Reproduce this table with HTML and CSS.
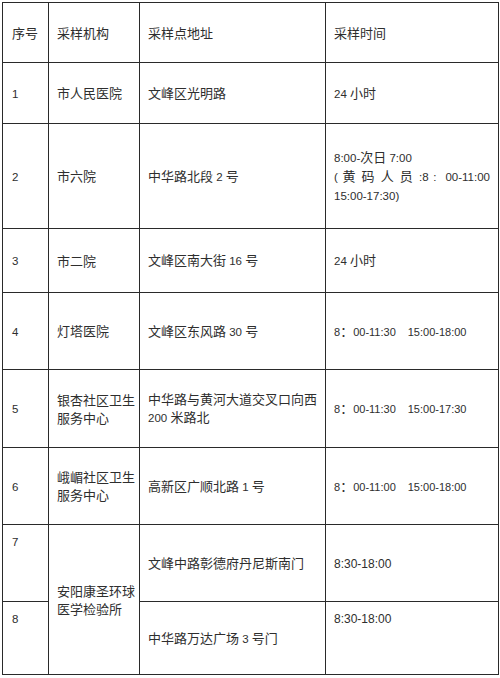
FILE: index.html
```html
<!DOCTYPE html>
<html lang="zh">
<head>
<meta charset="utf-8">
<link rel="stylesheet" href="styles.css">
</head>
<body>
<table class="sheet">
  <colgroup>
    <col class="c-no">
    <col class="c-org">
    <col class="c-addr">
    <col class="c-time">
  </colgroup>
  <tr class="r-head">
    <td>序号</td><td>采样机构</td><td>采样点地址</td><td>采样时间</td>
  </tr>
  <tr class="r1">
    <td><span class="n">1</span></td><td>市人民医院</td><td>文峰区光明路</td><td><span class="n">24 </span>小时</td>
  </tr>
  <tr class="r2">
    <td><span class="n">2</span></td><td>市六院</td><td>中华路北段<span class="n"> 2 </span>号</td>
    <td>
      <div><span class="n">8:00-</span>次日<span class="n"> 7:00</span></div>
      <div class="just"><span class="n">(</span> 黄 码 人 员 <span class="n">:8</span> <span class="n">:</span> &nbsp;<span class="n">00-11:00</span></div>
      <div><span class="n">15:00-17:30)</span></div>
    </td>
  </tr>
  <tr class="r3">
    <td><span class="n">3</span></td><td>市二院</td><td>文峰区南大街<span class="n"> 16 </span>号</td><td><span class="n">24 </span>小时</td>
  </tr>
  <tr class="r4">
    <td><span class="n">4</span></td><td>灯塔医院</td><td>文峰区东风路<span class="n"> 30 </span>号</td><td><span class="n s">8</span>：<span class="n s">00-11:30</span><span class="gap"></span><span class="n s">15:00-18:00</span></td>
  </tr>
  <tr class="r5">
    <td><span class="n">5</span></td><td>银杏社区卫生<br>服务中心</td><td>中华路与黄河大道交叉口向西<br><span class="n">200 </span>米路北</td><td><span class="n s">8</span>：<span class="n s">00-11:30</span><span class="gap"></span><span class="n s">15:00-17:30</span></td>
  </tr>
  <tr class="r6">
    <td><span class="n">6</span></td><td>峨嵋社区卫生<br>服务中心</td><td>高新区广顺北路<span class="n"> 1 </span>号</td><td><span class="n s">8</span>：<span class="n s">00-11:00</span><span class="gap"></span><span class="n s">15:00-18:00</span></td>
  </tr>
  <tr class="r7">
    <td class="top"><span class="n">7</span></td><td rowspan="2">安阳康圣环球<br>医学检验所</td><td>文峰中路彰德府丹尼斯南门</td><td><span class="n m">8:30-18:00</span></td>
  </tr>
  <tr class="r8">
    <td class="top"><span class="n">8</span></td><td>中华路万达广场<span class="n"> 3 </span>号门</td><td class="top"><span class="n m">8:30-18:00</span></td>
  </tr>
</table>
</body>
</html>
```

FILE: styles.css
```css
html, body {
  margin: 0;
  padding: 0;
  background: #fff;
}

body {
  font-family: "Noto Sans CJK SC", "Liberation Sans", sans-serif;
  font-size: 13px;
  color: #2e2e2e;
}

.sheet {
  margin: 2px 0 0 2px;
  width: 496px;
  border-collapse: collapse;
  table-layout: fixed;
}

.c-no { width: 46px; }
.c-org { width: 91px; }
.c-addr { width: 186px; }
.c-time { width: 173px; }

.sheet td {
  border: 1px solid #2a2a2a;
  padding: 0 2px 0 8px;
  line-height: 18px;
  vertical-align: middle;
  text-align: left;
  white-space: nowrap;
}

.sheet td:first-child {
  padding-left: 9px;
}

.sheet td:last-child {
  padding-right: 8px;
}

.sheet td.top {
  vertical-align: top;
  padding-top: 7px;
}

.n {
  font-family: "Liberation Sans", sans-serif;
  font-size: 11.5px;
}

.n.s {
  font-size: 11px;
}

.n.m {
  font-size: 12px;
}

.gap {
  display: inline-block;
  width: 12px;
}

.just {
  white-space: normal;
  text-align: justify;
  text-align-last: justify;
}

.r-head { height: 60px; }
.r1 { height: 61px; }
.r2 { height: 105px; }
.r3 { height: 64px; }
.r4 { height: 77px; }
.r5 { height: 78px; }
.r6 { height: 77px; }
.r7 { height: 77px; }
.r8 { height: 73px; }
```
